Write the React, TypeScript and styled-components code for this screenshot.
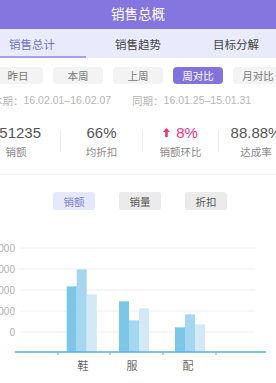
import styled, { createGlobalStyle } from 'styled-components'

const GlobalStyle = createGlobalStyle`
  html, body {
    margin: 0;
    padding: 0;
    background: #ffffff;
  }
  * {
    box-sizing: border-box;
  }
`

const periods = ['昨日', '本周', '上周', '周对比', '月对比']
const tabs = [
  { label: '销售总计', width: 108 },
  { label: '销售趋势', width: 104 },
  { label: '目标分解', width: 92 },
]

const stats = [
  { value: '251235', label: '销额', width: 88 },
  { value: '66%', label: '均折扣', width: 81 },
  { value: '8%', label: '销额环比', width: 75, up: true },
  { value: '88.88%', label: '达成率', width: 74 },
]

const gridRows = [
  { y: 19, label: '40000' },
  { y: 40, label: '30000' },
  { y: 61, label: '20000' },
  { y: 82, label: '10000' },
  { y: 103, label: '0' },
]

// bar groups: x of first bar, and top of each bar (svg coords)
const groups = [
  { name: '鞋', x: 66.7, labelX: 83, tops: [57, 40, 65] },
  { name: '服', x: 119, labelX: 132, tops: [72, 91, 79] },
  { name: '配', x: 175, labelX: 188, tops: [98, 85, 95] },
]
const barColors = ['#7cc6e7', '#a6d7f0', '#d3eaf6']
const AXIS_Y = 123

export default function App() {
  return (
    <Page>
      <GlobalStyle />
      <Header>销售总概</Header>

      <TabBar>
        {tabs.map((t, i) => (
          <Tab key={t.label} $active={i === 0} style={{ width: t.width }}>
            {t.label}
          </Tab>
        ))}
      </TabBar>

      <PeriodRow>
        {periods.map((p) => (
          <PeriodButton key={p} $active={p === '周对比'}>
            {p}
          </PeriodButton>
        ))}
      </PeriodRow>

      <DateRow>
        <DateText>
          <DateLabel>本期：</DateLabel>16.02.01–16.02.07
        </DateText>
        <DateText>
          <DateLabel>同期：</DateLabel>16.01.25–15.01.31
        </DateText>
      </DateRow>

      <StatsRow>
        {stats.map((s, i) => (
          <StatGroup key={s.label}>
            {i > 0 && <StatDivider />}
            <StatCell style={{ width: s.width }}>
              <StatValue $up={s.up}>
                {s.up && (
                  <svg width="7" height="9" viewBox="0 0 7 9">
                    <path d="M3.5 0 L7 4 L4.8 4 L4.8 9 L2.2 9 L2.2 4 L0 4 Z" fill="#f5317b" />
                  </svg>
                )}
                {s.value}
              </StatValue>
              <StatLabel>{s.label}</StatLabel>
            </StatCell>
          </StatGroup>
        ))}
      </StatsRow>

      <Separator />

      <LegendRow>
        <LegendButton $active>销额</LegendButton>
        <LegendButton>销量</LegendButton>
        <LegendButton>折扣</LegendButton>
      </LegendRow>

      <ChartBox>
        <svg width="276" height="153" viewBox="0 0 276 153">
          {gridRows.map((g) => (
            <g key={g.label}>
              <line x1="20" x2="255" y1={g.y} y2={g.y} stroke="#eeeeee" strokeWidth="1" />
              <text
                x="15"
                y={g.y + 3.5}
                textAnchor="end"
                fontSize="10"
                fill="#b0b0b0"
                fontFamily="'Liberation Sans', sans-serif"
              >
                {g.label}
              </text>
            </g>
          ))}
          {groups.map((grp) =>
            grp.tops.map((top, i) => (
              <g key={grp.name + i}>
                <rect
                  x={grp.x + i * 10}
                  y={top}
                  width="10"
                  height={AXIS_Y - top}
                  fill={barColors[i]}
                />
                <rect x={grp.x + i * 10} y={top} width="10" height="1" fill="#ffffff" opacity="0.35" />
              </g>
            ))
          )}
          <line x1="15" x2="266" y1={AXIS_Y} y2={AXIS_Y} stroke="#5aaedc" strokeWidth="1.5" />
          {[58, 110, 163, 216].map((x) => (
            <line key={x} x1={x} x2={x} y1={AXIS_Y} y2={AXIS_Y + 3} stroke="#5aaedc" strokeWidth="1" />
          ))}
          {groups.map((grp) => (
            <text
              key={grp.name}
              x={grp.labelX}
              y={141}
              textAnchor="middle"
              fontSize="11"
              fill="#666666"
              fontFamily="'Noto Sans CJK SC', sans-serif"
            >
              {grp.name}
            </text>
          ))}
        </svg>
      </ChartBox>
    </Page>
  )
}

const Page = styled.div`
  width: 276px;
  height: 383px;
  overflow: hidden;
  background: #ffffff;
  font-family: 'Liberation Sans', 'Noto Sans CJK SC', sans-serif;
  display: flex;
  flex-direction: column;
`

const Header = styled.div`
  height: 29px;
  flex-shrink: 0;
  background: #8576df;
  color: #ffffff;
  font-size: 13.5px;
  display: flex;
  align-items: center;
  justify-content: center;
  padding-bottom: 4px;
`

const TabBar = styled.div`
  height: 29px;
  flex-shrink: 0;
  background: #e9ebfc;
  display: flex;
  margin-left: -22px;
`

const Tab = styled.div<{ $active?: boolean }>`
  flex-shrink: 0;
  height: 100%;
  display: flex;
  align-items: center;
  justify-content: center;
  font-size: 11.5px;
  color: ${(p) => (p.$active ? '#6f73c9' : '#444444')};
  box-shadow: ${(p) => (p.$active ? 'inset 0 -2px 0 #a99ff0' : 'none')};
`

const PeriodRow = styled.div`
  display: flex;
  gap: 10px;
  margin-left: -7px;
  padding-top: 9px;
  flex-shrink: 0;
`

const PeriodButton = styled.div<{ $active?: boolean }>`
  width: 50px;
  height: 17px;
  flex-shrink: 0;
  border-radius: 4px;
  display: flex;
  align-items: center;
  justify-content: center;
  font-size: 10.5px;
  background: ${(p) => (p.$active ? '#8272de' : '#f3f3f3')};
  color: ${(p) => (p.$active ? '#ffffff' : '#777777')};
`

const DateRow = styled.div`
  display: flex;
  gap: 21px;
  margin-left: -8px;
  margin-top: 9px;
  height: 14px;
  align-items: center;
  white-space: nowrap;
  flex-shrink: 0;
`

const DateText = styled.span`
  font-size: 10.5px;
  color: #b5b5b5;
  display: flex;
  align-items: center;
`

const DateLabel = styled.span`
  font-family: 'Noto Sans CJK SC', sans-serif;
  width: 31.5px;
  flex-shrink: 0;
`

const StatsRow = styled.div`
  display: flex;
  margin-left: -28px;
  margin-top: 15px;
  flex-shrink: 0;
`

const StatGroup = styled.div`
  display: flex;
  align-items: center;
`

const StatDivider = styled.div`
  width: 1px;
  height: 22px;
  background: #ececec;
  flex-shrink: 0;
`

const StatCell = styled.div`
  flex-shrink: 0;
  display: flex;
  flex-direction: column;
  align-items: center;
  gap: 3px;
  white-space: nowrap;
`

const StatValue = styled.div<{ $up?: boolean }>`
  height: 20px;
  display: flex;
  align-items: center;
  gap: 6px;
  font-size: 15px;
  color: ${(p) => (p.$up ? '#f5317b' : '#555555')};
`

const StatLabel = styled.div`
  height: 14px;
  line-height: 14px;
  font-size: 10.5px;
  color: #8a8a8a;
`

const Separator = styled.div`
  height: 1px;
  margin-top: 15px;
  background: #f0f0f0;
  flex-shrink: 0;
`

const LegendRow = styled.div`
  display: flex;
  justify-content: center;
  gap: 24px;
  padding-top: 17px;
  padding-left: 4px;
  flex-shrink: 0;
`

const LegendButton = styled.div<{ $active?: boolean }>`
  width: 42px;
  height: 18px;
  border-radius: 3px;
  display: flex;
  align-items: center;
  justify-content: center;
  font-size: 10.5px;
  background: ${(p) => (p.$active ? '#e6e9fb' : '#ebebeb')};
  color: ${(p) => (p.$active ? '#7b80cf' : '#555555')};
`

const ChartBox = styled.div`
  margin-top: 19px;
  height: 153px;
  flex-shrink: 0;
  display: flex;
`
